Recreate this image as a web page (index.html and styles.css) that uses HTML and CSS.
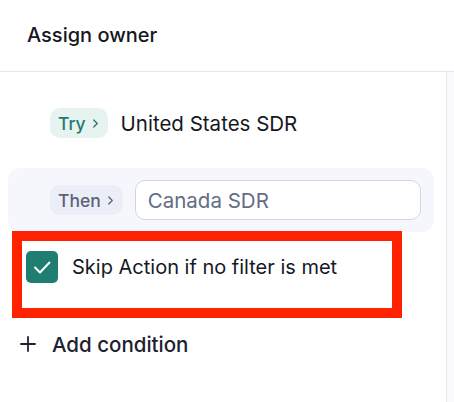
FILE: index.html
```html
<!DOCTYPE html>
<html>
<head>
<meta charset="utf-8">
<link rel="stylesheet" href="styles.css">
</head>
<body>
<div class="page">
  <header class="header">Assign owner</header>
  <div class="body">
    <main class="main">
      <div class="cond">
        <span class="pill pill-try">Try<svg class="chev" viewBox="0 0 8 12" width="7" height="11"><path d="M2 2l4 4-4 4" fill="none" stroke="currentColor" stroke-width="1.5" stroke-linecap="round" stroke-linejoin="round"/></svg></span>
        <span class="value">United States SDR</span>
      </div>
      <div class="cond cond-active">
        <span class="pill pill-then">Then<svg class="chev" viewBox="0 0 8 12" width="7" height="11"><path d="M2 2l4 4-4 4" fill="none" stroke="currentColor" stroke-width="1.5" stroke-linecap="round" stroke-linejoin="round"/></svg></span>
        <input class="input" type="text" placeholder="Canada SDR">
      </div>
      <div class="skip">
        <span class="checkbox"><svg viewBox="0 0 32 32" width="32" height="32"><path d="M9 16.5l5 5 9.5-10" fill="none" stroke="#fff" stroke-width="2" stroke-linecap="round" stroke-linejoin="round"/></svg></span>
        <span class="skip-label">Skip Action if no filter is met</span>
        <div class="highlight"></div>
      </div>
      <div class="add">
        <svg class="plus" viewBox="0 0 16 16" width="16" height="16"><path d="M8 1v14M1 8h14" stroke="#1d2130" stroke-width="1.8" stroke-linecap="round"/></svg>
        <span class="add-label">Add condition</span>
      </div>
    </main>
    <aside class="side"></aside>
  </div>
</div>
</body>
</html>
```
FILE: styles.css
```css
html, body {
  margin: 0;
  padding: 0;
  background: #ffffff;
}
body {
  font-family: Inter, "Noto Sans", sans-serif;
  color: #1d2130;
  width: 454px;
  height: 402px;
  overflow: hidden;
}
.page {
  display: flex;
  flex-direction: column;
  height: 402px;
}
.header {
  height: 72px;
  box-sizing: border-box;
  border-bottom: 1px solid #e3e6ee;
  display: flex;
  align-items: center;
  padding-left: 27px;
  padding-bottom: 2px;
  font-size: 20px;
  font-weight: 450;
  color: #16181f;
}
.body {
  flex: 1;
  display: flex;
}
.main {
  width: 446px;
  box-sizing: border-box;
  padding: 19px 12px 0 8px;
  display: flex;
  flex-direction: column;
}
.side {
  flex: 1;
  border-left: 1px solid #e6e8ef;
  background: #fbfbfd;
}
.cond {
  height: 64px;
  display: flex;
  align-items: center;
  padding-left: 42px;
  padding-right: 13px;
  border-radius: 12px;
}
.cond-active {
  margin-top: 13px;
  background: #f6f7fc;
}
.pill {
  display: inline-flex;
  align-items: center;
  gap: 6px;
  height: 30px;
  padding: 0 9px 0 8px;
  border-radius: 10px;
  font-size: 17.5px;
  font-weight: 500;
  flex-shrink: 0;
}
.pill-try {
  background: #e6f3f0;
  color: #237a6c;
}
.pill-then {
  background: #eceef7;
  color: #5a6479;
}
.chev {
  display: block;
}
.value {
  margin-left: 13px;
  font-size: 20.5px;
  color: #16181f;
}
.input {
  margin-left: 12px;
  flex: 1;
  width: 0;
  min-width: 0;
  height: 40px;
  box-sizing: border-box;
  border: 1px solid #d3d6e2;
  border-radius: 10px;
  background: #ffffff;
  padding: 0 12px;
  font-family: inherit;
  font-size: 20.5px;
  color: #16181f;
  outline: none;
}
.input::placeholder {
  color: #646d83;
}
.skip {
  position: relative;
  margin-top: 19px;
  height: 32px;
  display: flex;
  align-items: center;
  padding-left: 18px;
}
.checkbox {
  width: 32px;
  height: 32px;
  border-radius: 5px;
  background: #1f7d71;
  display: block;
  flex-shrink: 0;
}
.checkbox svg {
  display: block;
}
.skip-label {
  margin-left: 14px;
  font-size: 20px;
  color: #16181f;
}
.highlight {
  position: absolute;
  left: 4px;
  top: -20px;
  width: 390px;
  height: 87px;
  box-sizing: border-box;
  border: 10px solid #ff2200;
  pointer-events: none;
}
.add {
  margin-top: 49px;
  height: 24px;
  display: flex;
  align-items: center;
  padding-left: 12px;
}
.plus {
  display: block;
}
.add-label {
  margin-left: 16px;
  font-size: 20.5px;
  font-weight: 500;
  color: #1d2130;
}
```
